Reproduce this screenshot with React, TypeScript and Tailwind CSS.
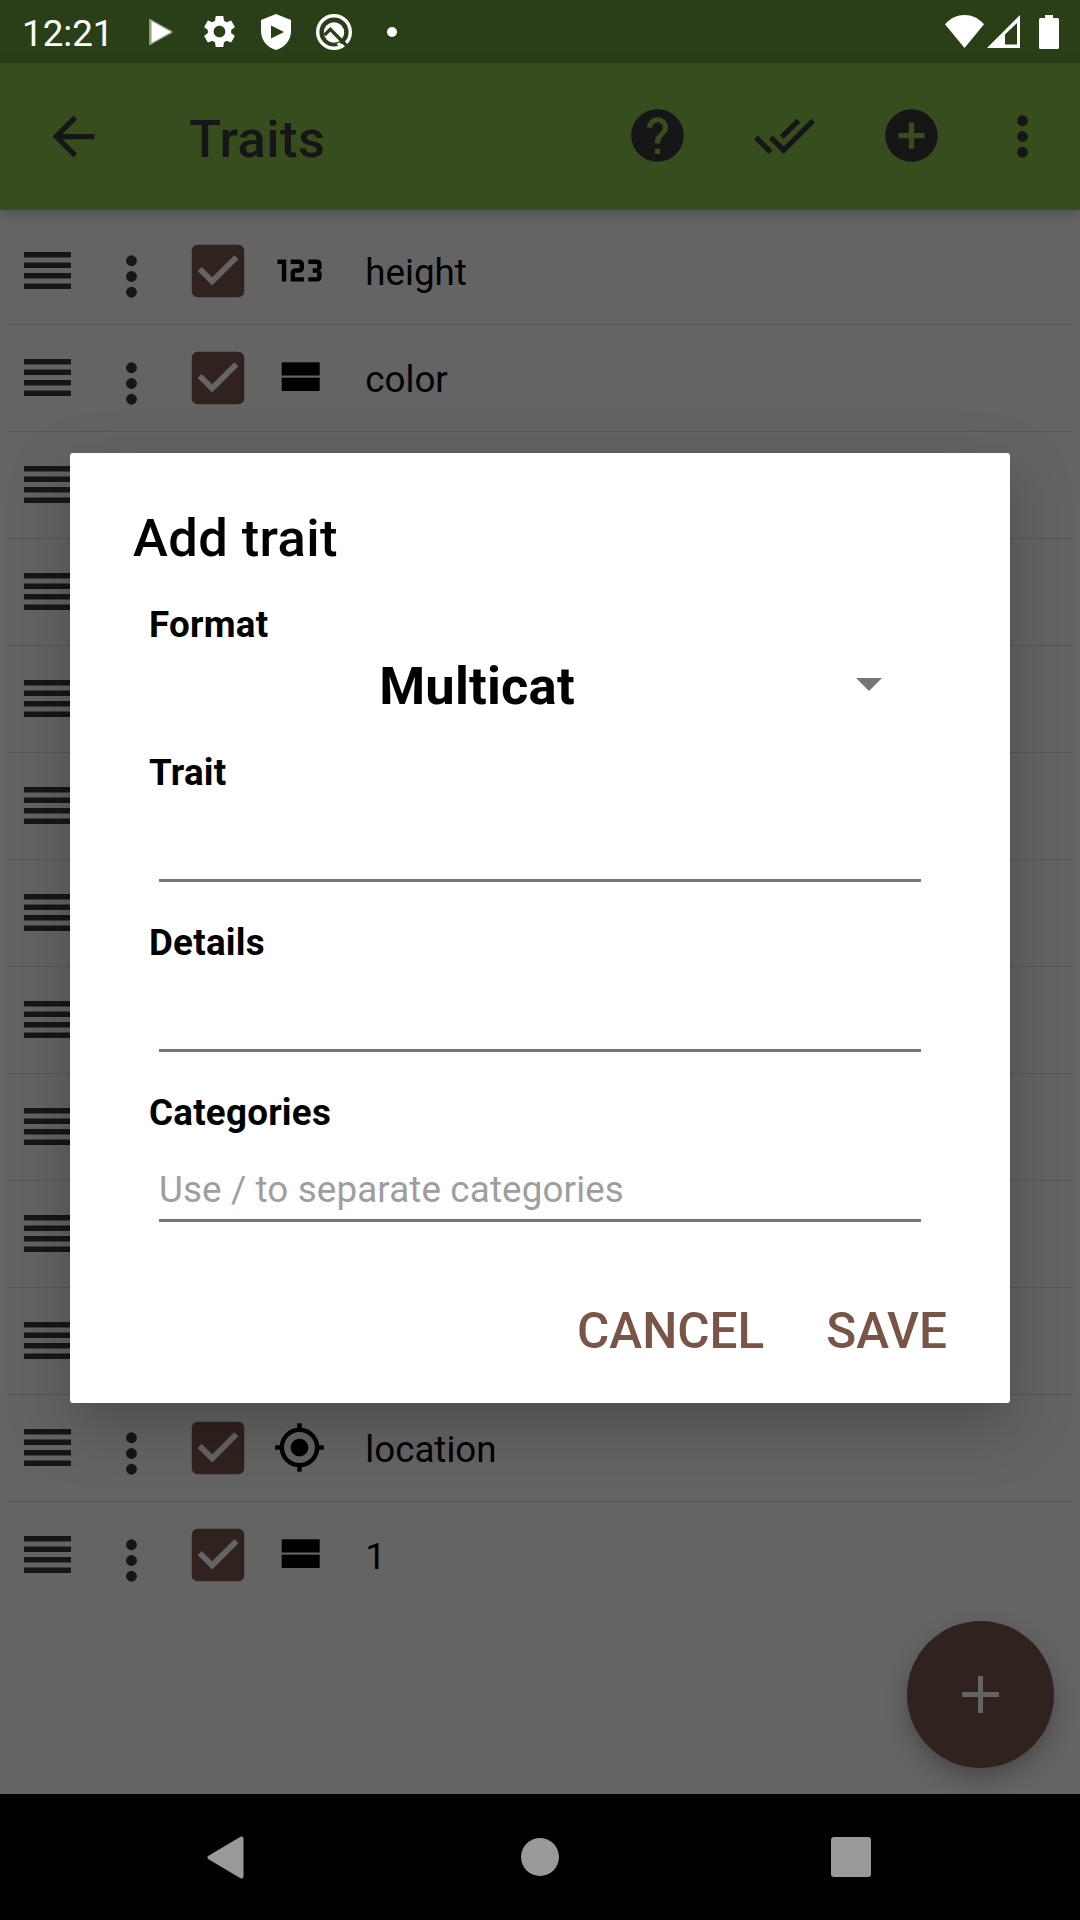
import React from "react";
import {
  MdArrowBack,
  MdHelp,
  MdDoneAll,
  MdAddCircle,
  MdCheckBox,
  MdGpsFixed,
  MdSettings,
} from "react-icons/md";

type Format = "numeric" | "categorical" | "location";
type Trait = { name: string; format: Format };

const traits: Trait[] = [
  { name: "height", format: "numeric" },
  { name: "color", format: "categorical" },
  ...Array.from({ length: 9 }, () => ({ name: "", format: "categorical" as Format })),
  { name: "location", format: "location" },
  { name: "1", format: "categorical" },
];

function Dots() {
  return (
    <svg viewBox="0 0 12 43" className="h-[43px] w-3 shrink-0 fill-[#161616]">
      <circle cx="5.5" cy="5.75" r="5.4" />
      <circle cx="5.5" cy="21.5" r="5.4" />
      <circle cx="5.5" cy="37.25" r="5.4" />
    </svg>
  );
}

function DragHandle() {
  return (
    <svg viewBox="0 0 47.25 37" className="mb-0.5 h-[37px] w-[47.25px] shrink-0 fill-[#161616]">
      <rect y="0" width="47.25" height="5.5" />
      <rect y="10.5" width="47.25" height="5.5" />
      <rect y="21" width="47.25" height="5.5" />
      <rect y="31.5" width="47.25" height="5.5" />
    </svg>
  );
}

function FormatIcon({ format }: { format: Format }) {
  if (format === "numeric") {
    return (
      <svg viewBox="0 0 24 24" className="size-[53px] shrink-0 fill-black">
        <path d="M4 17V9H2V7H6V17H4M22 15C22 16.11 21.1 17 20 17H16V15H20V13H18V11H20V9H16V7H20A2 2 0 0 1 22 9V10.5A1.5 1.5 0 0 1 20.5 12A1.5 1.5 0 0 1 22 13.5V15M14 15V17H8V13C8 11.89 8.9 11 10 11H12V9H8V7H12A2 2 0 0 1 14 9V11C14 12.11 13.1 13 12 13H10V15H14Z" />
      </svg>
    );
  }
  if (format === "location") return <MdGpsFixed className="size-[53px] shrink-0 text-black" />;
  return (
    <svg viewBox="0 0 53 53" className="size-[53px] shrink-0 fill-black">
      <rect x="8.7" y="11.3" width="38" height="13.2" />
      <rect x="8.7" y="26.7" width="38" height="13.3" />
    </svg>
  );
}

function TraitRow({ trait, last }: { trait: Trait; last: boolean }) {
  return (
    <li className={last ? "" : "border-b border-[#565656]"}>
      <div className="flex h-[106px] items-center pl-4">
        <DragHandle />
        <div className="ml-[54.75px] mt-[11px] flex">
          <Dots />
        </div>
        <MdCheckBox className="ml-[45.25px] size-[70px] shrink-0 text-[#30221e]" />
        <div className="mb-0.5 ml-5 flex">
          <FormatIcon format={trait.format} />
        </div>
        <span className="ml-[39px] mt-[5px] text-[36.75px] leading-none text-black">
          {trait.name}
        </span>
      </div>
    </li>
  );
}

function StatusBar() {
  return (
    <div className="flex h-[63px] shrink-0 items-center bg-[#2a3f17] text-white">
      <span className="ml-[22px] mt-1.5 w-[92px] text-[36.75px] leading-none">12:21</span>
      <svg viewBox="0 0 24 26" className="ml-[35px] h-[26px] w-6">
        <path d="M0 0.500Q0 -0.500 1.500 0L23 12Q24.500 13 23 14L1.500 26Q0 26.500 0 25.500Z" fill="#8f9b86" />
        <path d="M2.500 2L22 13L2.500 24Z" fill="white" />
      </svg>
      <MdSettings className="ml-[27px] size-[39px]" />
      <svg viewBox="0 0 30 36" className="ml-[22px] h-9 w-[30px]">
        <path
          fill="white"
          fillRule="evenodd"
          d="M15 0L30 6V17C30 26 24 33.5 15 36C6 33.5 0 26 0 17V6ZM10 11.5V24.5L23 18Z"
        />
      </svg>
      <svg viewBox="0 0 36 36" className="ml-[25px] size-9">
        <circle cx="18" cy="18" r="16.3" fill="none" stroke="white" strokeWidth="3.400" />
        <circle cx="18" cy="18.500" r="10.200" fill="white" />
        <path d="M8.500 21L14.300 15.300L32 33" fill="none" stroke="#2a3f17" strokeWidth="3.400" />
        <path d="M20.500 30.200L25.500 34.200L27.500 32.200L23.500 28.200Z" fill="white" />
      </svg>
      <span className="ml-[35px] size-2.5 rounded-full bg-white" />
      <div className="ml-auto mr-[21px] flex items-center">
        <svg viewBox="0 0 39 33" className="h-[33px] w-[39px] fill-white">
          <path d="M0 9.2C11 -3 28 -3 39 9.2L19.5 33Z" />
        </svg>
        <svg viewBox="0 0 33 33" className="ml-[3px] size-[33px]">
          <path fill="white" fillRule="evenodd" d="M33 0V33H0ZM30 8L18 19.5V29.5H30Z" />
        </svg>
        <svg viewBox="0 0 20 34" className="ml-[19px] h-[34px] w-5 fill-white">
          <path d="M6 0H14V3H18.5Q20 3 20 4.500V32.5Q20 34 18.500 34H1.500Q0 34 0 32.500V4.500Q0 3 1.500 3H6Z" />
        </svg>
      </div>
    </div>
  );
}

function AppBar() {
  return (
    <header className="z-10 flex h-[147px] shrink-0 items-center bg-[#384d1e] text-[#161616] shadow-[0_2px_12px_rgba(0,0,0,0.22)]">
      <MdArrowBack className="ml-[42px] size-[63px]" />
      <h1 className="ml-[84px] mt-[5px] text-[52.5px] font-medium leading-none tracking-[0.4px]">Traits</h1>
      <div className="ml-auto mr-[51px] flex items-center">
        <MdHelp className="mb-0.5 size-[63px]" />
        <MdDoneAll className="mb-0.5 ml-16 size-[63px]" />
        <MdAddCircle className="mb-0.5 ml-16 size-[63px]" />
        <div className="ml-[74px] flex">
          <Dots />
        </div>
      </div>
    </header>
  );
}

function Field({ label, hint }: { label: string; hint?: string }) {
  return (
    <label className="flex h-[170px] flex-col">
      <span className="text-[36.75px] font-bold leading-[43px] tracking-[0.24px]">{label}</span>
      <span className="ml-2.5 mt-[34px] h-[51px] w-[762px] text-[36.75px] leading-[43px] tracking-[0.14px] text-[#9e9e9e]">
        {hint}
      </span>
      <span className="ml-2.5 h-[2.6px] w-[762px] bg-[#757575]" />
    </label>
  );
}

function AddTraitDialog() {
  return (
    <div className="absolute left-[70px] top-[453px] flex h-[950px] w-[940px] flex-col rounded-[3px] bg-white text-black shadow-[0_22px_62px_rgba(0,0,0,0.25)]">
      <h2 className="ml-[63px] mt-[54px] text-[52.5px] font-medium leading-[62px] tracking-[0.4px]">Add trait</h2>
      <div className="ml-[79px] mt-[34px] text-[36.75px] font-bold leading-[43px] tracking-[0.24px]">Format</div>
      <div className="ml-[79px] flex h-[105px] w-[780px] items-center pb-[25px]">
        <div className="w-[656px] text-center text-[52.5px] font-bold leading-none tracking-[0.2px]">Multicat</div>
        <svg viewBox="0 0 26 13" className="ml-[50.5px] mb-[3px] h-[13px] w-[26px] fill-[#757575]">
          <path d="M0 0H26L13 13Z" />
        </svg>
      </div>
      <div className="ml-[79px] flex flex-col">
        <Field label="Trait" />
        <Field label="Details" />
        <Field label="Categories" hint="Use / to separate categories" />
      </div>
      <div className="mr-[63px] mt-[41px] flex justify-end gap-[62px] text-[49.5px] font-medium leading-[58px] text-[#795548]">
        <button>CANCEL</button>
        <button>SAVE</button>
      </div>
    </div>
  );
}

function NavBar() {
  return (
    <nav className="flex h-[126px] shrink-0 items-center bg-black">
      <svg viewBox="0 0 37 43" className="ml-[207px] h-[43px] w-[37px]">
        <path d="M34.500 2.500V40.500L2.500 21.500Z" fill="#999" stroke="#999" strokeWidth="4" strokeLinejoin="round" />
      </svg>
      <span className="ml-[277px] size-[38px] rounded-full bg-[#999]" />
      <span className="ml-[272px] size-10 rounded-[3px] bg-[#999]" />
    </nav>
  );
}

export default function App() {
  return (
    <div className="relative flex h-[1920px] w-[1080px] flex-col overflow-hidden bg-[#646464] font-['Roboto',sans-serif]">
      <StatusBar />
      <AppBar />
      <main className="min-h-0 flex-1">
        <ul className="ml-2 mr-2 mt-2">
          {traits.map((trait, i) => (
            <TraitRow key={i} trait={trait} last={i === traits.length - 1} />
          ))}
        </ul>
      </main>
      <button className="absolute left-[907px] top-[1621px] flex size-[147px] items-center justify-center rounded-full bg-[#30221e] shadow-[0_10px_22px_rgba(0,0,0,0.28)]">
        <svg viewBox="0 0 37 37" className="size-[37px] fill-[#646464]">
          <path d="M16 0H21V16H37V21H21V37H16V21H0V16H16Z" />
        </svg>
      </button>
      <NavBar />
      <AddTraitDialog />
    </div>
  );
}
